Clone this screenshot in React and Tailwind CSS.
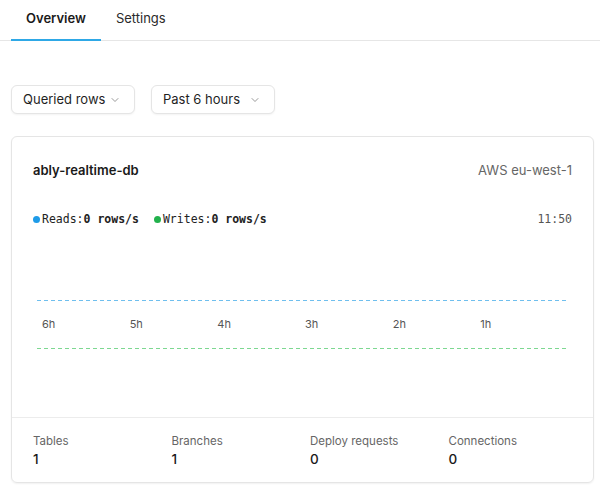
import { ChevronDown } from "lucide-react";

const stats = [
    { label: "Tables", value: "1" },
    { label: "Branches", value: "1" },
    { label: "Deploy requests", value: "0" },
    { label: "Connections", value: "0" },
];

const ticks = ["6h", "5h", "4h", "3h", "2h", "1h"];

const Select = ({ label }) => (
    <button className="flex items-center justify-between h-[29px] w-[124px] pl-[11px] pr-[13px] border border-[#e5e5e5] rounded-md bg-white text-[13px] text-[#1f1f1f] whitespace-nowrap shadow-[0_1px_2px_rgba(0,0,0,0.05)]">
        <span>{label}</span>
        <ChevronDown size={12} strokeWidth={1.5} className="text-[#777]" />
    </button>
);

const App = () => {
    return (
        <div className="w-[600px] h-[492px] bg-white font-['Inter','Liberation_Sans',sans-serif] overflow-hidden">
            <div className="flex border-b border-[#e6e6e6] pl-[11px] h-[41px]">
                <div className="px-[15px] pt-[9px] text-[13px] font-semibold text-[#1a1a1a] border-b-2 border-[#2ea8e6] -mb-px">Overview</div>
                <div className="px-[15px] pt-[9px] text-[13px] text-[#2a2a2a]">Settings</div>
            </div>

            <div className="flex gap-[16px] pl-[11px] mt-[44px]">
                <Select label="Queried rows" />
                <Select label="Past 6 hours" />
            </div>

            <div className="ml-[11px] mt-[22px] w-[583px] h-[347px] border border-[#e5e5e5] rounded-md shadow-[0_1px_2px_rgba(0,0,0,0.06)] flex flex-col">
                <div className="flex-1 px-[21px]">
                    <div className="flex justify-between items-center mt-[24px]">
                        <span className="text-[13px] font-semibold text-[#1a1a1a]">ably-realtime-db</span>
                        <span className="text-[13px] text-[#666]">AWS eu-west-1</span>
                    </div>
                    <div className="flex justify-between items-center mt-[30px] font-['DejaVu_Sans_Mono',monospace] text-[11.5px] text-[#222]">
                        <div className="flex items-center">
                            <span className="w-[7px] h-[7px] rounded-full bg-[#1e9be8] mr-[2px]"></span>
                            <span>Reads:</span><span className="font-bold">0 rows/s</span>
                            <span className="w-[7px] h-[7px] rounded-full bg-[#22b14c] ml-[15px] mr-[2px]"></span>
                            <span>Writes:</span><span className="font-bold">0 rows/s</span>
                        </div>
                        <span className="text-[#555]">11:50</span>
                    </div>
                    <div className="mt-[72px] px-[4px]">
                        <div className="h-px bg-[repeating-linear-gradient(90deg,#6fbfee_0_4px,transparent_4px_7px)]"></div>
                        <div className="flex pl-[5px] mt-[16px] text-[11px] text-[#555] h-[14px] items-center">
                            {ticks.map((t) => (
                                <span key={t} className="w-[88px]">{t}</span>
                            ))}
                        </div>
                        <div className="h-px mt-[17px] bg-[repeating-linear-gradient(90deg,#7dd891_0_4px,transparent_4px_7px)]"></div>
                    </div>
                </div>
                <div className="border-t border-[#ececec] h-[65px] grid grid-cols-4 pl-[21px] pr-[6px] pt-[15px]">
                    {stats.map((s) => (
                        <div key={s.label}>
                            <div className="text-[11.5px] text-[#666] leading-[16px]">{s.label}</div>
                            <div className="text-[13.5px] font-medium text-[#1a1a1a] leading-[20px]">{s.value}</div>
                        </div>
                    ))}
                </div>
            </div>
        </div>
    );
};

export default App;
